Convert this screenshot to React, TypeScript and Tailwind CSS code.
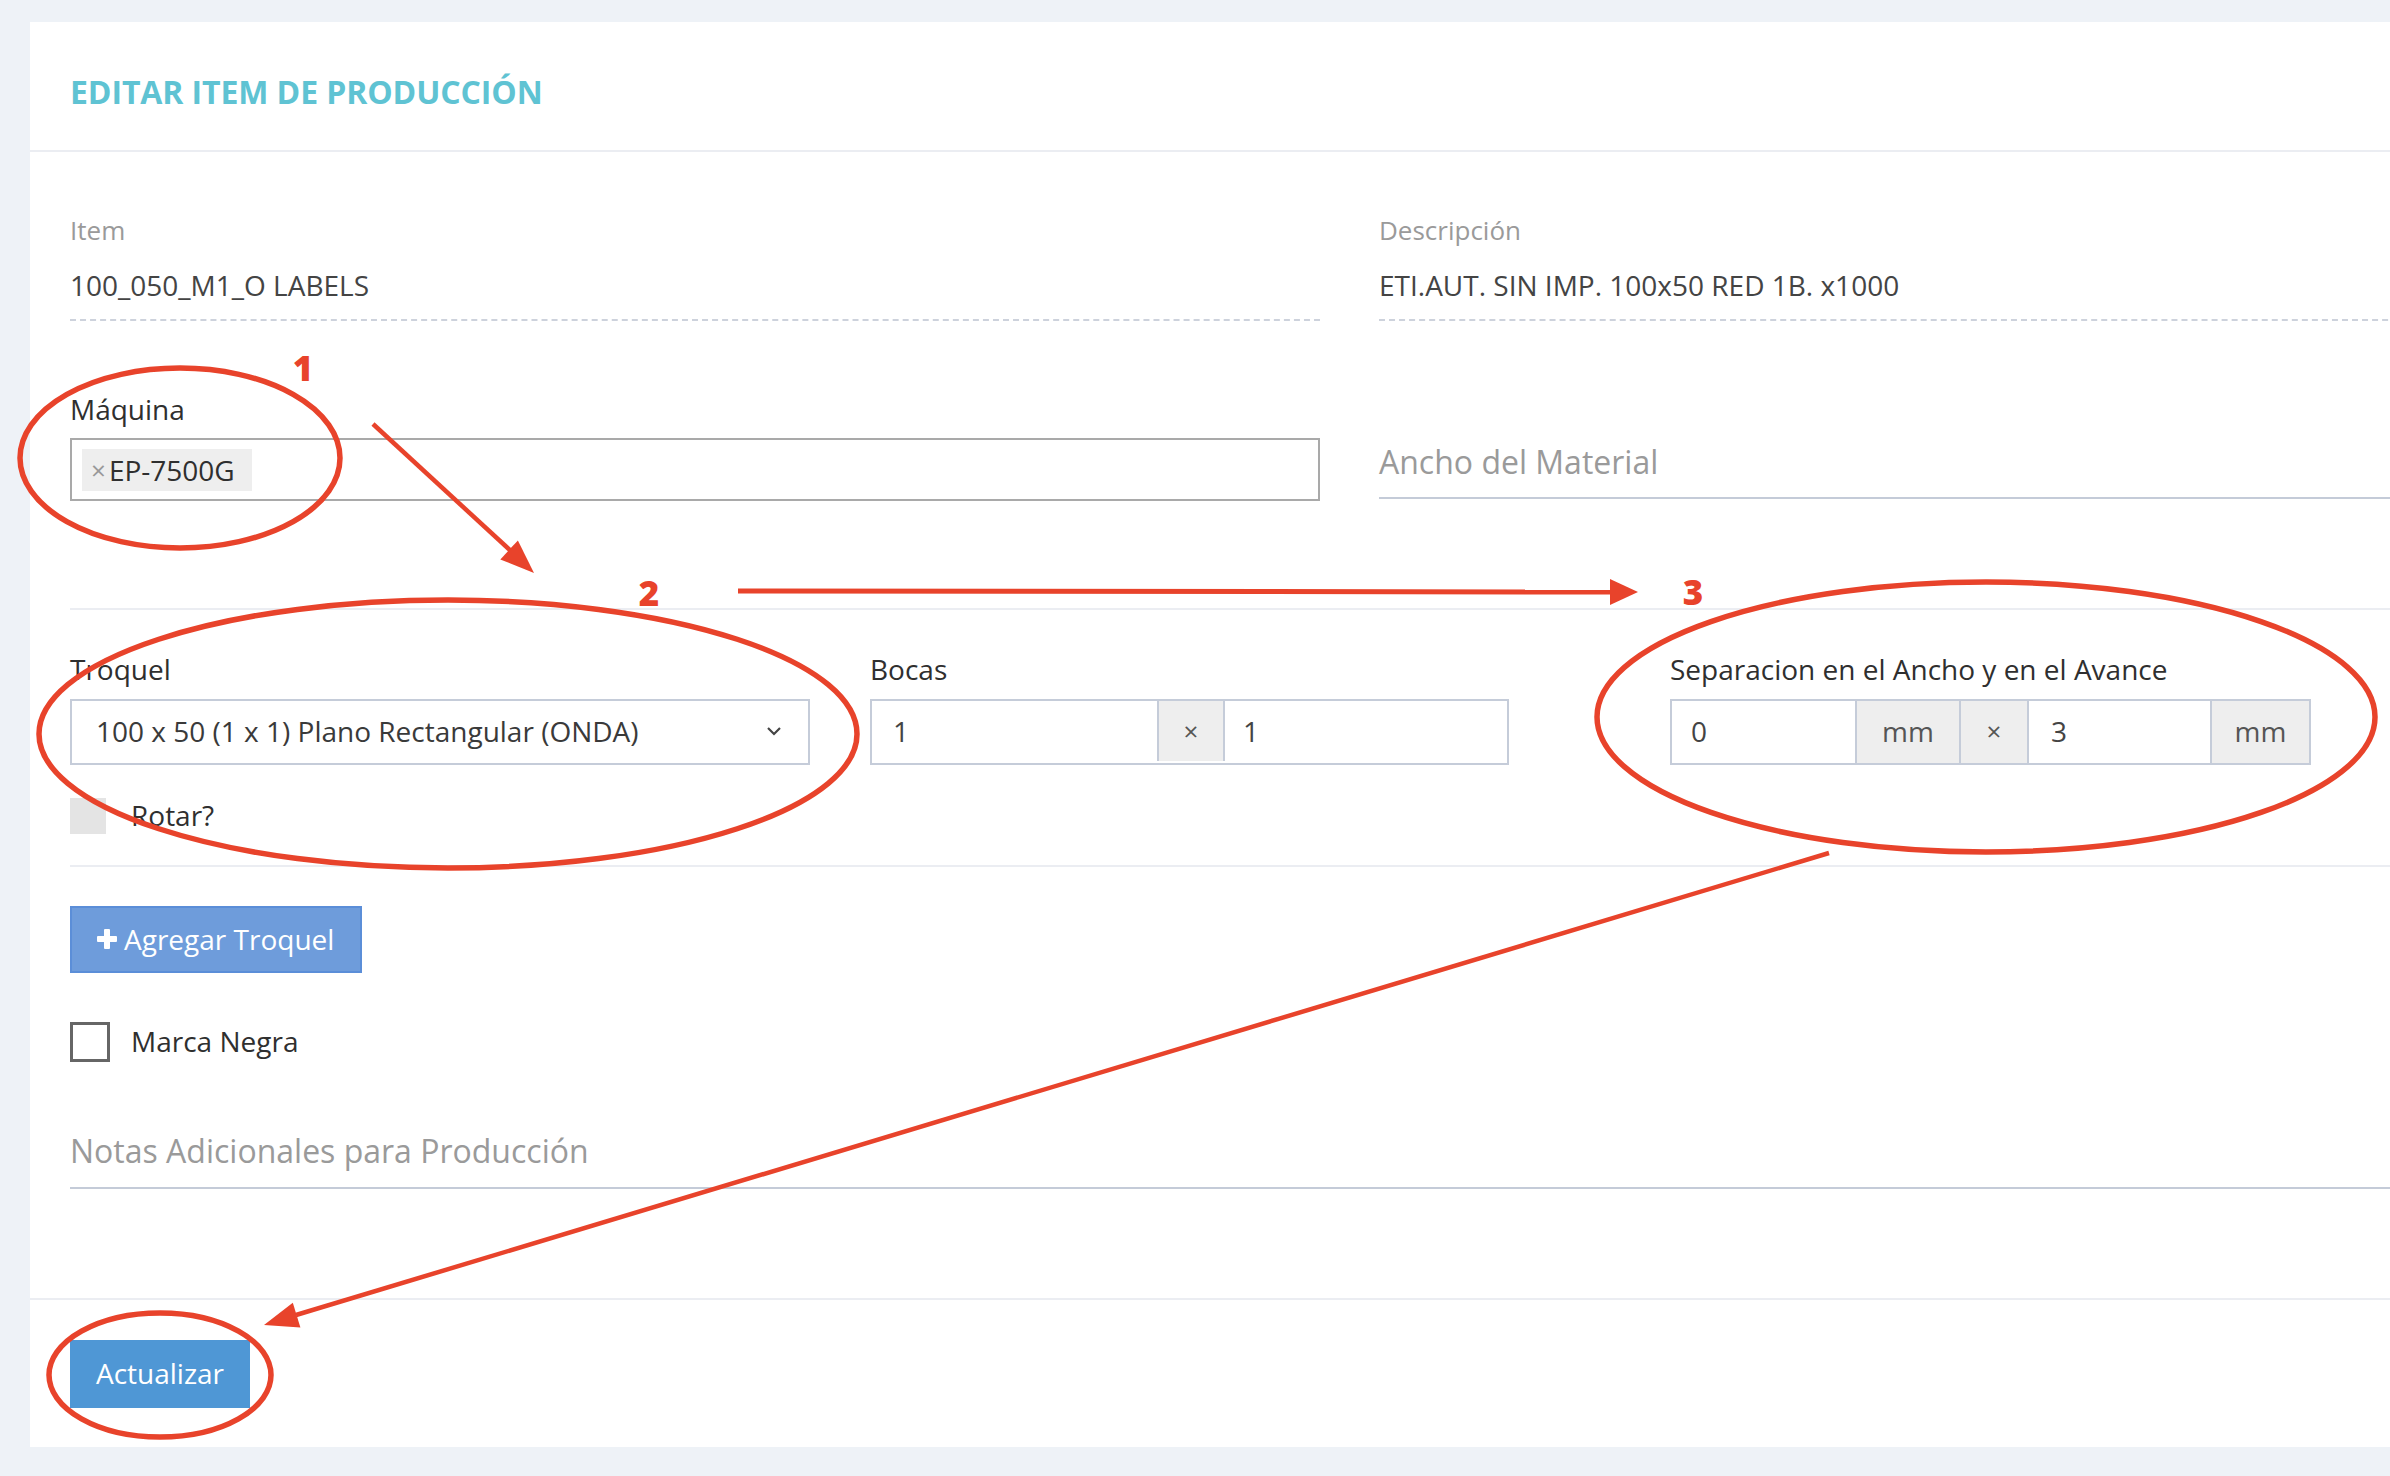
import React from "react";

function Annotations() {
  const red = "#e8432b";
  return (
    <svg
      className="pointer-events-none absolute left-0 top-0"
      width={2390}
      height={1476}
      viewBox="0 0 2390 1476"
    >
      <g fill="none" stroke={red} strokeWidth={5.5}>
        <ellipse cx={180} cy={458} rx={160} ry={90} />
        <ellipse cx={448} cy={734} rx={409} ry={134} />
        <ellipse cx={1986} cy={717} rx={389} ry={135} />
        <ellipse cx={160} cy={1375} rx={111} ry={62} />
        <line x1={373} y1={424} x2={512} y2={552} strokeWidth={4.5} />
        <line x1={738} y1={591} x2={1612} y2={592} strokeWidth={5} />
        <line x1={1829} y1={853} x2={296} y2={1315} strokeWidth={4.5} />
      </g>
      <g fill={red}>
        <polygon points="534,573 500.3,559.4 517.9,540.4" />
        <polygon points="1638,592 1610,579 1610,605" />
        <polygon points="264,1325 300.4,1327.6 292.8,1302.8" />
      </g>
      <g
        fill={red}
        fontFamily="'Open Sans', 'Liberation Sans', sans-serif"
        fontWeight={800}
        fontSize={35}
        textAnchor="middle"
      >
        <text x={303} y={381}>1</text>
        <text x={649} y={606}>2</text>
        <text x={1693} y={605}>3</text>
      </g>
    </svg>
  );
}

export default function App() {
  return (
    <div className="relative h-[1476px] w-[2390px] overflow-hidden bg-[#eef2f7] font-['Open_Sans','Liberation_Sans',sans-serif]">
      <div className="ml-[30px] mt-[22px] w-[2700px] bg-white">
        {/* header */}
        <div className="h-[130px] border-b-2 border-[#ebedf2] pl-[40px] pt-[54px]">
          <div className="text-[32px] font-bold leading-none tracking-[-0.1px] text-[#5fc3d3]">
            EDITAR ITEM DE PRODUCCIÓN
          </div>
        </div>

        {/* body */}
        <div className="pl-[40px] pb-[109px]">
          {/* row 1 */}
          <div className="flex gap-[59px] pt-[65px]">
            <div className="w-[1250px] border-b-2 border-dashed border-[#cdd2dc] pb-[20px]">
              <div className="text-[26px] leading-none text-[#9a9a9a]">Item</div>
              <div className="mt-[28px] text-[28px] leading-none text-[#444444]">
                100_050_M1_O LABELS
              </div>
            </div>
            <div className="w-[1300px] border-b-2 border-dashed border-[#cdd2dc] pb-[20px]">
              <div className="text-[26px] leading-none text-[#9a9a9a]">Descripción</div>
              <div className="mt-[28px] text-[28px] leading-none text-[#444444]">
                ETI.AUT. SIN IMP. 100x50 RED 1B. x1000
              </div>
            </div>
          </div>

          {/* row 2 */}
          <div className="flex gap-[59px] pt-[74px]">
            <div className="w-[1250px]">
              <div className="text-[28px] leading-none text-[#2f2f2f]">Máquina</div>
              <div className="mt-[15px] flex h-[63px] items-center border-2 border-[#a9a9a9] pl-[10px]">
                <div className="flex h-[42px] w-[170px] items-center bg-[#eeeeee] pl-[9px]">
                  <span className="text-[26px] leading-none text-[#999999]">×</span>
                  <span className="ml-[3px] text-[28px] leading-none text-[#2f2f2f]">EP-7500G</span>
                </div>
              </div>
            </div>
            <div className="w-[1300px] pt-[51px]">
              <div className="border-b-2 border-[#c4cbd8] pb-[19px] text-[32px] leading-none text-[#9a9a9a]">
                Ancho del Material
              </div>
            </div>
          </div>

          <div className="mt-[107px] h-[2px] bg-[#ebedf2]" />

          {/* row 3 */}
          <div className="flex items-start pt-[45px]">
            <div className="w-[740px]">
              <div className="text-[28px] leading-none text-[#2f2f2f]">Troquel</div>
              <div className="mt-[16px] flex h-[66px] items-center justify-between border-2 border-[#c5ccd9] pb-[2px] pl-[24px] pr-[26px]">
                <span className="text-[28px] leading-none text-[#3a3a3a]">
                  100 x 50 (1 x 1) Plano Rectangular (ONDA)
                </span>
                <svg width="16" height="10" viewBox="0 0 16 10">
                  <polyline points="2,2 8,8 14,2" fill="none" stroke="#444" strokeWidth="2.2" />
                </svg>
              </div>
              <div className="mt-[33px] flex items-center">
                <div className="h-[36px] w-[36px] bg-[#e4e4e4]" />
                <span className="ml-[25px] pb-[2px] text-[28px] leading-none text-[#2f2f2f]">Rotar?</span>
              </div>
            </div>

            <div className="ml-[60px] w-[639px]">
              <div className="text-[28px] leading-none text-[#2f2f2f]">Bocas</div>
              <div className="mt-[16px] flex h-[66px] border-2 border-[#c5ccd9] pb-[2px]">
                <div className="flex w-[285px] items-center pl-[21px] text-[28px] leading-none text-[#444444]">1</div>
                <div className="flex w-[68px] items-center justify-center border-x-2 border-[#c5ccd9] bg-[#eeeeee] text-[26px] leading-none text-[#555555]">×</div>
                <div className="flex flex-1 items-center pl-[18px] text-[28px] leading-none text-[#444444]">1</div>
              </div>
            </div>

            <div className="ml-[161px] w-[641px]">
              <div className="text-[28px] leading-none text-[#2f2f2f]">
                Separacion en el Ancho y en el Avance
              </div>
              <div className="mt-[16px] flex h-[66px] border-2 border-[#c5ccd9]">
                <div className="flex w-[183px] items-center pb-[2px] pl-[19px] text-[28px] leading-none text-[#444444]">0</div>
                <div className="flex w-[104px] items-center justify-center border-l-2 border-[#c5ccd9] bg-[#eeeeee] pb-[2px] text-[28px] leading-none text-[#555555]">mm</div>
                <div className="flex w-[68px] items-center justify-center border-l-2 border-[#c5ccd9] bg-[#eeeeee] pb-[2px] text-[26px] leading-none text-[#555555]">×</div>
                <div className="flex w-[183px] items-center border-l-2 border-[#c5ccd9] pb-[2px] pl-[22px] text-[28px] leading-none text-[#444444]">3</div>
                <div className="flex flex-1 items-center justify-center border-l-2 border-[#c5ccd9] bg-[#eeeeee] pb-[2px] text-[28px] leading-none text-[#555555]">mm</div>
              </div>
            </div>
          </div>

          <div className="mt-[31px] h-[2px] bg-[#ebedf2]" />

          <button className="mt-[39px] flex h-[67px] w-[292px] items-center border-2 border-[#5b8ed8] bg-[#6e9cdb] pb-[2px] pl-[24px] text-[28px] leading-none text-white">
            <svg width="22" height="22" viewBox="0 0 22 22" className="mr-[6px]">
              <rect x="8" y="1" width="6" height="20" rx="1" fill="white" />
              <rect x="1" y="8" width="20" height="6" rx="1" fill="white" />
            </svg>
            Agregar Troquel
          </button>

          <div className="mt-[49px] flex items-center">
            <div className="h-[40px] w-[40px] border-[3px] border-[#666666] bg-white" />
            <span className="ml-[21px] pb-[2px] text-[28px] leading-none text-[#2f2f2f]">Marca Negra</span>
          </div>

          <div className="mt-[73px] border-b-2 border-[#c4cbd8] pb-[20px] text-[32px] leading-none text-[#9a9a9a]">
            Notas Adicionales para Producción
          </div>
        </div>

        {/* footer */}
        <div className="border-t-2 border-[#ebedf2] pl-[40px] pt-[40px] pb-[39px]">
          <button className="flex h-[68px] w-[180px] items-center justify-center bg-[#4f97d5] pb-[2px] text-[28px] leading-none text-white">
            Actualizar
          </button>
        </div>
      </div>

      <Annotations />
    </div>
  );
}
